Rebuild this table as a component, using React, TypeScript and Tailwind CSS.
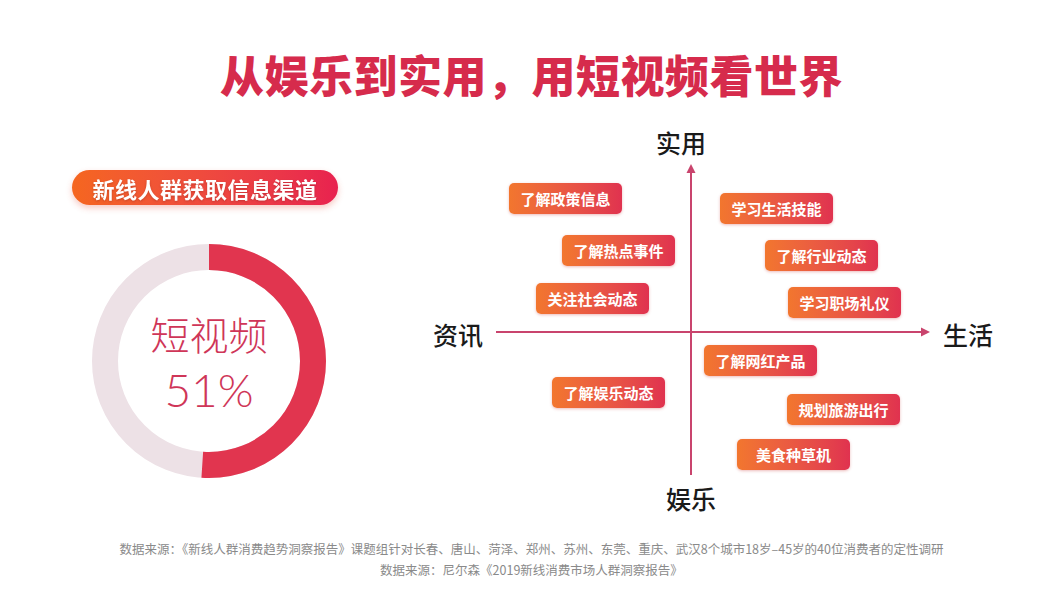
import React from "react";

const FONT = { fontFamily: '"Noto Sans CJK SC", "Noto Sans", sans-serif' };

type Box = { t: string; x: number; y: number };

const boxes: Box[] = [
  { t: "了解政策信息", x: 89, y: 63 },
  { t: "了解热点事件", x: 142, y: 115 },
  { t: "关注社会动态", x: 116, y: 163 },
  { t: "学习生活技能", x: 300, y: 73 },
  { t: "了解行业动态", x: 345, y: 120 },
  { t: "学习职场礼仪", x: 368, y: 167 },
  { t: "了解网红产品", x: 284, y: 225 },
  { t: "了解娱乐动态", x: 132, y: 257 },
  { t: "规划旅游出行", x: 367, y: 274 },
  { t: "美食种草机", x: 317, y: 319 },
];

function Donut() {
  const r = 104;
  const c = 2 * Math.PI * r;
  const red = c * 0.51;
  return (
    <div className="relative w-[236px] h-[236px]">
      <svg width="236" height="236" viewBox="0 0 236 236" className="absolute inset-0">
        <circle cx="118" cy="118" r={r} fill="none" stroke="#ede1e6" strokeWidth="26" />
        <circle
          cx="118"
          cy="118"
          r={r}
          fill="none"
          stroke="#e1354f"
          strokeWidth="26"
          strokeDasharray={`${red} ${c}`}
          transform="rotate(-90 118 118)"
        />
      </svg>
      <div className="absolute inset-0 flex flex-col items-center justify-center text-[#cf3658] font-light">
        <div className="text-[39px] leading-[57px]">短视频</div>
        <div
          className="text-[46px] leading-[55px]"
          style={{ fontFamily: 'Lato, "Noto Sans", sans-serif' }}
        >
          51%
        </div>
      </div>
    </div>
  );
}

function Chart() {
  return (
    <div className="relative w-[643px] h-[400px]">
      <div className="absolute left-[236px] top-[7px] text-[25px] leading-[30px] text-[#1a1a1a] font-medium">实用</div>
      <div className="absolute left-[13px] top-[199px] text-[25px] leading-[30px] text-[#1a1a1a] font-medium">资讯</div>
      <div className="absolute left-[523px] top-[199px] text-[25px] leading-[30px] text-[#1a1a1a] font-medium">生活</div>
      <div className="absolute left-[246px] top-[363px] text-[25px] leading-[30px] text-[#1a1a1a] font-medium">娱乐</div>

      <div className="absolute left-[269.5px] top-[50px] w-[2px] h-[305px] bg-[#c9446d]" />
      <svg className="absolute left-[265.5px] top-[44px]" width="10" height="9" viewBox="0 0 10 9">
        <polygon points="5,0 9.5,9 0.5,9" fill="#c9446d" />
      </svg>

      <div className="absolute left-[76px] top-[211px] w-[428px] h-[2px] bg-[#c9446d]" />
      <svg className="absolute left-[501px] top-[207px]" width="9" height="10" viewBox="0 0 9 10">
        <polygon points="9,5 0,0.5 0,9.5" fill="#c9446d" />
      </svg>

      {boxes.map((b) => (
        <div
          key={b.t}
          className="absolute w-[113px] h-[31px] rounded-[5px] bg-gradient-to-r from-[#f2762e] to-[#e0324f] shadow-[0_1px_3px_rgba(200,60,60,0.35)] flex items-center justify-center text-white text-[15px] font-semibold leading-none"
          style={{ left: b.x, top: b.y }}
        >
          {b.t}
        </div>
      ))}
    </div>
  );
}

export default function App() {
  return (
    <div className="w-[1063px] h-[594px] bg-white overflow-hidden flex flex-col" style={FONT}>
      <div className="h-[120px] pt-[51px] flex justify-center">
        <div className="text-[44px] leading-[46px] font-black text-[#d62b4c] tracking-[0.5px]">
          从娱乐到实用，用短视频看世界
        </div>
      </div>
      <div className="h-[400px] flex">
        <div className="w-[420px] flex flex-col">
          <div className="mt-[50px] ml-[72px] w-[266px] h-[35px] rounded-full bg-gradient-to-r from-[#f5661f] to-[#e8214f] shadow-[0_3px_6px_rgba(230,80,60,0.3)] flex items-center justify-center">
            <span className="text-white text-[22px] font-bold leading-none tracking-[0.5px] drop-shadow-[0_1px_1px_rgba(120,30,20,0.35)]">
              新线人群获取信息渠道
            </span>
          </div>
          <div className="mt-[38px] ml-[91px]">
            <Donut />
          </div>
        </div>
        <Chart />
      </div>
      <div className="pt-[18px] flex flex-col items-center text-[12.5px] leading-[21px] text-[#8a8a8a]">
        <div>
          数据来源：《新线人群消费趋势洞察报告》课题组针对长春、唐山、菏泽、郑州、苏州、东莞、重庆、武汉8个城市18岁–45岁的40位消费者的定性调研
        </div>
        <div>数据来源：尼尔森《2019新线消费市场人群洞察报告》</div>
      </div>
    </div>
  );
}
